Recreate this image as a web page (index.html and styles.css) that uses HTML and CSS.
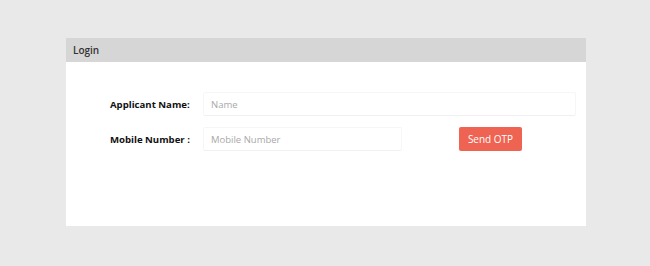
FILE: index.html
```html
<!DOCTYPE html>
<html>
<head>
<meta charset="utf-8">
<link rel="stylesheet" href="styles.css">
</head>
<body>
<div class="page">
  <div class="card">
    <div class="card-header">Login</div>
    <div class="card-body">
      <div class="row">
        <label class="label">Applicant Name:</label>
        <input class="field field-wide" type="text" placeholder="Name">
      </div>
      <div class="row">
        <label class="label">Mobile Number :</label>
        <input class="field field-short" type="text" placeholder="Mobile Number">
        <button class="btn">Send OTP</button>
      </div>
    </div>
  </div>
</div>
</body>
</html>
```
FILE: styles.css
```css
html, body {
  margin: 0;
  padding: 0;
  background: #e9e9e9;
  font-family: "Open Sans", "Liberation Sans", sans-serif;
}
.page {
  padding: 38px 0 0 66px;
}
.card {
  width: 520px;
  height: 188px;
  background: #ffffff;
  display: flex;
  flex-direction: column;
}
.card-header {
  height: 24px;
  background: #d6d6d6;
  color: #333;
  font-size: 10px;
  font-weight: 600;
  line-height: 24px;
  padding-left: 7px;
}
.card-body {
  padding: 30px 0 0 44px;
  display: flex;
  flex-direction: column;
  gap: 11px;
}
.row {
  display: flex;
  align-items: center;
  height: 24px;
}
.label {
  width: 93px;
  font-size: 9.6px;
  font-weight: 700;
  color: #111;
}
.field {
  box-sizing: border-box;
  height: 24px;
  border: 1px solid #f6f6f6;
  border-bottom-color: #f0f0f0;
  border-radius: 2px;
  padding: 0 7px;
  font-family: inherit;
  font-size: 9.5px;
  color: #333;
  background: #fff;
  outline: none;
}
.field::placeholder {
  color: #a9a9a9;
}
.field-wide {
  width: 373px;
}
.field-short {
  width: 199px;
}
.btn {
  margin-left: 57px;
  width: 63px;
  height: 24px;
  border: none;
  border-radius: 2px;
  background: #ee6352;
  color: #fff;
  font-family: inherit;
  font-size: 10px;
  padding: 0;
}
```
